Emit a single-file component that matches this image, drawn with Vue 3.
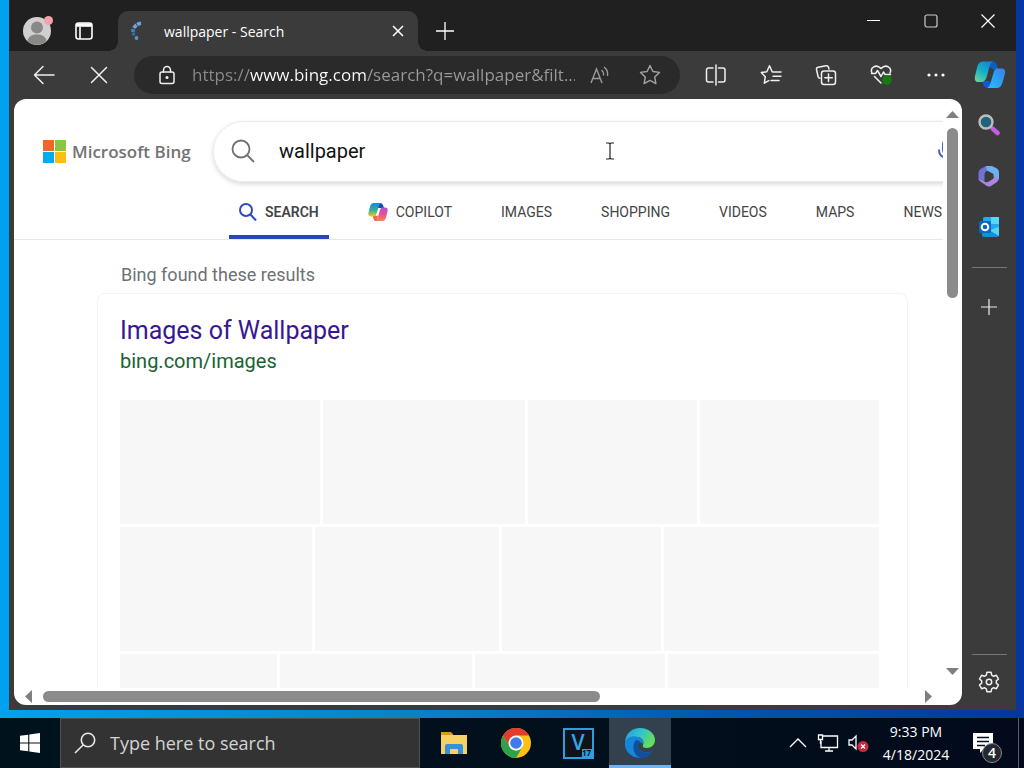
<script setup>
import { ref } from "vue";

const address = ref("https://www.bing.com/search?q=wallpaper&filt...");
const query = ref("wallpaper");
const taskQuery = ref("");

const tabs = [
  { id: 1, label: "SEARCH", icon: "search" },
  { id: 2, label: "COPILOT", icon: "copilot" },
  { id: 3, label: "IMAGES" },
  { id: 4, label: "SHOPPING" },
  { id: 5, label: "VIDEOS" },
  { id: 6, label: "MAPS" },
  { id: 7, label: "NEWS" },
];
const activeTab = ref(1);

// relative widths of the image placeholders, row by row
const imageRows = [
  [201, 203, 169, 180],
  [193, 184, 160, 216],
  [158, 192, 191, 212],
];

const scroll = { vertical: 32, horizontal: 64 };
</script>

<template>
  <div class="desktop">
    <div class="workspace">
      <main class="window">
        <header class="titlebar">
          <button class="profile" aria-label="Profile">
            <svg width="32" height="32" viewBox="0 0 32 32">
              <circle cx="15" cy="17" r="14" fill="#d2d0ce" />
              <circle cx="15" cy="13.500" r="6" fill="#8a8886" />
              <path d="M5.500 27c1-5 4.500-6.500 9.500-6.500s8.500 1.500 9.500 6.500a14 14 0 0 1-19 0z" fill="#8a8886" />
              <circle cx="26.500" cy="6.500" r="4.500" fill="#f4a3aa" />
            </svg>
          </button>
          <button class="tab-actions" aria-label="Tab actions menu">
            <svg width="20" height="20" viewBox="0 0 20 20" fill="none" stroke="#fff" stroke-width="1.600">
              <rect x="2" y="2" width="16" height="16" rx="2.500" />
              <path d="M2 4.500h16M6 6v12" />
              <path d="M3 4h14" stroke-width="3.500" />
            </svg>
          </button>
          <div class="browser-tab">
            <svg width="20" height="20" viewBox="0 0 20 20" fill="none">
              <path d="M13 2.200Q8 3 6 7" stroke="#6ba6dc" stroke-width="3.600" stroke-dasharray="4 .8" />
              <path d="M5 8v3" stroke="#3f83c4" stroke-width="3.600" />
              <circle cx="5.500" cy="13" r="1.800" fill="#2f6fae" />
              <circle cx="8.500" cy="17" r="1.900" fill="#5596d2" />
            </svg>
            <span class="tab-title">wallpaper - Search</span>
            <button class="close-tab" aria-label="Close tab">
              <svg width="12" height="12" viewBox="0 0 12 12" stroke="#fff" stroke-width="1.500">
                <path d="M1 1l10 10M11 1L1 11" />
              </svg>
            </button>
          </div>
          <button class="new-tab" aria-label="New tab">
            <svg width="18" height="18" viewBox="0 0 18 18" stroke="#fff" stroke-width="1.300">
              <path d="M9 0v18M0 9h18" />
            </svg>
          </button>
          <div class="window-controls">
            <button aria-label="Minimize">
              <svg width="14" height="14" viewBox="0 0 14 14" stroke="#fff"><path d="M0 6.500h13" /></svg>
            </button>
            <button aria-label="Maximize">
              <svg width="14" height="14" viewBox="0 0 14 14" fill="none" stroke="#ccc" stroke-width="1.200">
                <rect x="1" y="1" width="12" height="12" rx="2" />
              </svg>
            </button>
            <button aria-label="Close">
              <svg width="14" height="14" viewBox="0 0 14 14" stroke="#fff" stroke-width="1.200">
                <path d="M.5.5l13 13M13.500.5l-13 13" />
              </svg>
            </button>
          </div>
        </header>

        <div class="toolbar">
          <div class="tools">
            <button aria-label="Back">
              <svg class="line-icon" width="22" height="20" viewBox="0 0 22 20">
                <path d="M10 1.500L1.500 10l8.500 8.500M1.500 10H21" />
              </svg>
            </button>
            <button aria-label="Stop loading">
              <svg class="line-icon" width="18" height="18" viewBox="0 0 18 18">
                <path d="M1.500 1.500l15 15M16.500 1.500l-15 15" />
              </svg>
            </button>
          </div>
          <div class="omnibox">
            <button aria-label="View site information">
              <svg class="line-icon" width="18" height="20" viewBox="0 0 18 20">
                <rect x="2" y="7" width="14" height="11.500" rx="2" />
                <path d="M5.500 7V5a3.500 3.500 0 0 1 7 0v2" />
                <circle cx="9" cy="12.500" r=".8" fill="#fff" />
              </svg>
            </button>
            <input v-model="address" class="address" type="text" aria-label="Address and search bar" />
            <button aria-label="Read aloud">
              <svg width="22" height="20" viewBox="0 0 22 20" fill="none" stroke="#9b9b9b" stroke-width="1.400">
                <path d="M2 18L7.500 4 13 18M4 13.500h7M12.500 5q2.500 2 2 5.500M15 2q4.500 3.500 3.500 9" />
              </svg>
            </button>
            <button aria-label="Add this page to favorites">
              <svg width="22" height="22" viewBox="0 0 22 22" fill="none" stroke="#a2a2a2" stroke-width="1.400" stroke-linejoin="round">
                <path d="M11 1.500l2.900 6 6.600.9-4.800 4.600 1.200 6.600-5.900-3.200-5.900 3.200 1.200-6.600L1.500 8.400l6.600-.9z" />
              </svg>
            </button>
          </div>
          <div class="tools">
            <button aria-label="Split screen">
              <svg class="line-icon" width="22" height="22" viewBox="0 0 22 22">
                <path d="M8 4H3.500a2 2 0 0 0-2 2v10a2 2 0 0 0 2 2H8M13.500 4h4.500a2 2 0 0 1 2 2v10a2 2 0 0 1-2 2h-4.500M11 1v20" />
              </svg>
            </button>
            <button aria-label="Favorites">
              <svg class="line-icon" width="22" height="22" viewBox="0 0 22 22">
                <path d="M13 8l-.8-.3L9.500 1.800 6.800 7.700l-5.500.8 4 4.200-1 6.500 4.500-2.500M13 8h8M13 12.200h8M11 16.500h8" />
              </svg>
            </button>
            <button aria-label="Collections">
              <svg class="line-icon" width="22" height="22" viewBox="0 0 22 22">
                <path d="M14 5l-.6-2a2 2 0 0 0-2.300-1.300l-8 1.500A2 2 0 0 0 1.500 5.500l1.700 7.500q.4 1.200 1.800 1.200" />
                <rect x="6.500" y="7" width="14" height="13.500" rx="2.500" />
                <path d="M13.500 10v7.500M9.800 13.700h7.500" />
              </svg>
            </button>
            <button aria-label="Browser essentials">
              <svg class="line-icon" width="22" height="22" viewBox="0 0 22 22">
                <path d="M2 9C-.5 3.500 6-.5 11 4.500 16-.5 22.500 3.500 20 9M1.500 9.500h4l2-3 3.500 6 2.500-4.500 1.500 2.500h5.500M4.500 12.500l6.500 6.500" />
                <circle cx="17" cy="16" r="4.800" fill="#137b10" stroke="none" />
              </svg>
            </button>
            <button aria-label="Settings and more">
              <svg width="18" height="4" viewBox="0 0 18 4" fill="#fff">
                <circle cx="2" cy="2" r="1.600" /><circle cx="9" cy="2" r="1.600" /><circle cx="16" cy="2" r="1.600" />
              </svg>
            </button>
            <button class="copilot-btn" aria-label="Copilot">
              <svg width="32" height="28" viewBox="0 0 32 28">
                <defs>
                  <linearGradient id="copilotLeft" x1="0" y1="1" x2="0.600" y2="0">
                    <stop offset="0" stop-color="#74d997" /><stop offset=".55" stop-color="#18b3c2" /><stop offset="1" stop-color="#1689d8" />
                  </linearGradient>
                  <linearGradient id="copilotRight" x1="1" y1="0" x2="0" y2="1">
                    <stop offset="0" stop-color="#397fe8" /><stop offset="1" stop-color="#22c1ff" />
                  </linearGradient>
                </defs>
                <path d="M17 .5h2q3 0 4 4l1 4h-5l-4-3z" fill="#0b5fc0" />
                <path d="M8 20h7l4 7h-4q-5 0-6-4z" fill="#1357df" />
                <path d="M9 .5h10q-2.500 1-3.500 5L13 15q-1.500 6-6 6H4Q0 21 1 15L3.500 5Q5 .5 9 .5z" fill="url(#copilotLeft)" />
                <path d="M23 7.500h4.500q4.500 0 3.500 5l-2.500 9q-1.500 5.500-6 5.500H13q2.500-1 3.500-5l3-10q1-4.500 3.500-4.500z" fill="url(#copilotRight)" />
              </svg>
            </button>
          </div>
        </div>

        <div class="window-body">
          <section class="page">
            <div class="viewport">
              <div class="content">
                <form class="search-row" @submit.prevent>
                  <a class="logo" href="#">
                    <svg width="23" height="23" viewBox="0 0 23 23">
                      <path d="M0 0h11v11H0z" fill="#f06529" /><path d="M12 0h11v11H12z" fill="#8cc63f" />
                      <path d="M0 12h11v11H0z" fill="#00adef" /><path d="M12 12h11v11H12z" fill="#fdbf0f" />
                    </svg>
                    <span>Microsoft Bing</span>
                  </a>
                  <div class="searchbox">
                    <svg width="24" height="24" viewBox="0 0 24 24" fill="none" stroke="#717171" stroke-width="1.800">
                      <circle cx="10" cy="10" r="8.500" /><path d="M16 16l7 7" />
                    </svg>
                    <input v-model="query" type="text" aria-label="Search the web" />
                    <button aria-label="Search using voice">
                      <svg width="18" height="26" viewBox="0 0 18 26" fill="none" stroke="#4b62b5" stroke-width="2">
                        <rect x="5" y="2" width="8" height="14" rx="4" />
                        <path d="M1 11.500q0 8 8 8t8-8M9 19.500V25" />
                      </svg>
                    </button>
                    <svg class="ibeam" width="10" height="18" viewBox="0 0 10 18" fill="none" stroke="#222" stroke-width="1.200">
                      <path d="M1 1h3l1 1 1-1h3M5 2v14M1 17h3l1-1 1 1h3" />
                    </svg>
                  </div>
                </form>

                <nav class="scopes">
                  <a
                    v-for="tab in tabs"
                    :key="tab.id"
                    href="#"
                    :class="{ active: tab.id === activeTab }"
                    @click.prevent="activeTab = tab.id"
                  >
                    <svg v-if="tab.icon === 'search'" width="18" height="18" viewBox="0 0 18 18" fill="none" stroke="#2a4cc0" stroke-width="2">
                      <circle cx="7" cy="7" r="6" /><path d="M11.500 11.500L17 17.500" />
                    </svg>
                    <svg v-if="tab.icon === 'copilot'" width="20" height="18" viewBox="0 0 20 18">
                      <defs>
                        <linearGradient id="scopeLeft" x1="0" y1="0" x2="0" y2="1">
                          <stop offset="0" stop-color="#148ce0" /><stop offset=".5" stop-color="#31ab9b" /><stop offset="1" stop-color="#eecb26" />
                        </linearGradient>
                        <linearGradient id="scopeRight" x1="0" y1="0" x2="0" y2="1">
                          <stop offset="0" stop-color="#a653e0" /><stop offset=".5" stop-color="#ea4e93" /><stop offset="1" stop-color="#f98556" />
                        </linearGradient>
                      </defs>
                      <path d="M10 0h2.500q2 0 2.700 2.500l.8 2.500h-6z" fill="#184bb5" />
                      <path d="M4.500 12.500H10l-1 5.500H7.500Q6 18 5.400 15.500z" fill="#f26a42" />
                      <path d="M5.500 0H13q-1.500.5-2.200 3L9 9.500Q8 13.500 5 13.500H3Q-.5 13.500.5 9.500l1.500-6Q3 0 5.500 0z" fill="url(#scopeLeft)" />
                      <path d="M14.500 4.500H17q3.500 0 2.500 4l-1.500 6Q17 18 14.500 18H7.500q1.500-.5 2.200-3L11.500 8.500q1-4 3-4z" fill="url(#scopeRight)" />
                      <path d="M10.500 6.500q.8-1.500 2-1.500-.7 1-1.200 3L10 11.500q-.5 1.500-2 1.500.7-1 1.200-3z" fill="#fff" />
                    </svg>
                    {{ tab.label }}
                  </a>
                </nav>

                <p class="found">Bing found these results</p>
                <article class="card">
                  <h2><a href="#">Images of Wallpaper</a></h2>
                  <cite>bing.com/images</cite>
                  <div class="gallery">
                    <div v-for="(row, i) in imageRows" :key="i" class="gallery-row">
                      <div v-for="(size, j) in row" :key="j" class="thumb" :style="{ flexGrow: size }"></div>
                    </div>
                  </div>
                </article>
              </div>
            </div>

            <div class="scrollbar vertical">
              <svg width="13" height="7" viewBox="0 0 13 7" fill="#7f7f7f"><path d="M0 7l6.500-7L13 7z" /></svg>
              <div class="track">
                <div class="bar" :style="{ height: scroll.vertical + '%' }"></div>
              </div>
              <svg width="13" height="7" viewBox="0 0 13 7" fill="#7f7f7f"><path d="M0 0l6.500 7L13 0z" /></svg>
            </div>
            <div class="scrollbar horizontal">
              <svg width="7" height="13" viewBox="0 0 7 13" fill="#7f7f7f"><path d="M7 0L0 6.500 7 13z" /></svg>
              <div class="track">
                <div class="bar" :style="{ width: scroll.horizontal + '%' }"></div>
              </div>
              <svg width="7" height="13" viewBox="0 0 7 13" fill="#7f7f7f"><path d="M0 0l7 6.500L0 13z" /></svg>
            </div>
          </section>

          <aside class="sidebar">
            <button aria-label="Search">
              <svg width="22" height="22" viewBox="0 0 22 22">
                <path d="M12 12l3 3" stroke="#b8b8b8" stroke-width="3" />
                <path d="M15 15l4.500 4" stroke="#c65be6" stroke-width="4.500" stroke-linecap="round" />
                <circle cx="8" cy="8" r="6.500" fill="#20637a" stroke="#bdbdbd" stroke-width="2.400" />
              </svg>
            </button>
            <button aria-label="Microsoft 365">
              <svg width="22" height="22" viewBox="0 0 22 22">
                <path d="M8 1L2.500 4Q.5 5.500.5 8v7l6 2.500V9.500Q6.500 7 8.500 6L14 3z" fill="#6d74d6" />
                <path d="M1 14q.3 2 2 3l6 4q2 1.200 4 0l6-4q2-1.500 2-4V9l-5 3q-.5 1.500-2 2.500l-3 2q-2 1-4 .5z" fill="#ab84e4" />
                <path d="M8 1h6l5 2.500q2 1.500 2 4V14l-5.500-2.500V9L9 5.500z" fill="#6fb0f0" />
              </svg>
            </button>
            <button aria-label="Outlook">
              <svg width="22" height="22" viewBox="0 0 22 22">
                <rect x="5" y="1" width="16" height="19" rx="1.500" fill="#28a8ea" />
                <path d="M13 1h8v7h-8z" fill="#50d9ff" />
                <path d="M4 11l17 2v6q0 2-2 2H6q-2 0-2-2z" fill="#1490df" />
                <path d="M21 11v9L11 14z" fill="#5ad1f5" />
                <rect x="1" y="5" width="12" height="12" rx="1.500" fill="#0868be" />
                <circle cx="7" cy="11" r="3.300" fill="none" stroke="#fff" stroke-width="2" />
              </svg>
            </button>
            <hr />
            <button aria-label="Customize">
              <svg width="16" height="16" viewBox="0 0 16 16" stroke="#eee" stroke-width="1.200"><path d="M8 0v16M0 8h16" /></svg>
            </button>
            <hr class="bottom-rule" />
            <button class="settings" aria-label="Settings">
              <svg class="line-icon" width="22" height="22" viewBox="0 0 22 22">
                <path d="M8.900 1.300h4.200l.6 2.900 1.900 1.100 2.800-1 2.100 3.700-2.200 1.900v2.200l2.200 1.900-2.100 3.700-2.800-1-1.900 1.100-.6 2.900H8.900l-.6-2.900-1.900-1.100-2.800 1L1.500 14l2.200-1.900V9.900L1.500 8l2.100-3.700 2.800 1 1.900-1.100z" />
                <circle cx="11" cy="11" r="2.700" />
              </svg>
            </button>
          </aside>
        </div>
      </main>
    </div>

    <footer class="taskbar">
      <button class="start" aria-label="Start">
        <svg width="20" height="20" viewBox="0 0 20 20" fill="#fff">
          <path d="M0 2.800L8.200 1.700v7.800H0zM9.300 1.500L20 0v9.500H9.300zM0 10.500h8.200v7.800L0 17.200zM9.300 10.500H20V20L9.300 18.500z" />
        </svg>
      </button>
      <label class="task-search">
        <svg width="22" height="22" viewBox="0 0 22 22" fill="none" stroke="#e8e8e8" stroke-width="1.600">
          <circle cx="14" cy="8" r="6.700" /><path d="M9.300 12.800L1 21" />
        </svg>
        <input v-model="taskQuery" type="text" placeholder="Type here to search" aria-label="Type here to search" />
      </label>
      <div class="pinned">
        <button aria-label="File Explorer">
          <svg width="28" height="26" viewBox="0 0 28 26">
            <path d="M1 2h10l2 2v4H1z" fill="#d99a1c" />
            <path d="M1 5h26v19H1z" fill="#f8d166" />
            <path d="M5 24v-8q0-2 2-2h14q2 0 2 2v8h-5v-5h-8v5z" fill="#3b8fd2" />
          </svg>
        </button>
        <button aria-label="Google Chrome">
          <svg width="30" height="30" viewBox="0 0 30 30">
            <circle cx="15" cy="15" r="15" fill="#fbc116" />
            <path d="M2 7.500A15 15 0 0 1 28 7.500H15L8.500 18.800z" fill="#e33b2e" />
            <path d="M2 7.500A15 15 0 0 0 15 30l6.500-11.200A7.500 7.500 0 0 1 8.500 18.800z" fill="#2ba24c" />
            <circle cx="15" cy="15" r="7.500" fill="#fff" /><circle cx="15" cy="15" r="5.800" fill="#3b7ded" />
          </svg>
        </button>
        <button class="vegas" aria-label="VEGAS Pro">
          <span class="vegas-box">V<span class="vegas-version">17</span></span>
        </button>
        <button class="running" aria-label="Microsoft Edge">
          <svg width="32" height="32" viewBox="0 0 32 32">
            <defs>
              <linearGradient id="edgeTop" x1="0" y1="0" x2="1" y2=".5">
                <stop offset="0" stop-color="#2299d8" /><stop offset=".5" stop-color="#2fc3d0" /><stop offset="1" stop-color="#66df57" />
              </linearGradient>
            </defs>
            <path d="M1 15C2 6 8 1 16 1c9 0 15 6 15 12 0 5-4 8-8 8-3 0-5-1-4-3 2-5-2-8-7-8-6 0-10 3-11 5z" fill="url(#edgeTop)" />
            <path d="M1 15c2-5 8-7 13-5 4 1 6 4 5 7-3-3-6 0-5 3 1 5 8 7 14 4-3 5-8 7-13 7C6 30 0 23 1 15z" fill="#1685dc" />
            <path d="M12 13c-4 4-4 14 4 18 5 0 10-3 12-7-6 3-13 1-14-4-.5-2 1-4 3-4-1-2-3-3-5-3z" fill="#0e509c" />
          </svg>
        </button>
      </div>
      <div class="tray">
        <button aria-label="Show hidden icons">
          <svg width="18" height="12" viewBox="0 0 18 12" fill="none" stroke="#fff" stroke-width="1.300"><path d="M1 10l8-8 8 8" /></svg>
        </button>
        <button aria-label="Network">
          <svg width="22" height="20" viewBox="0 0 22 20" fill="none" stroke="#fff" stroke-width="1.300">
            <path d="M6 3h14.500v11.500H4V8M12 14.500V18M8 18h8" /><path d="M1.500 2h4v4.500h-4zM3.500 7v4" />
          </svg>
        </button>
        <button aria-label="Speakers, muted">
          <svg width="22" height="20" viewBox="0 0 22 20" fill="none" stroke="#fff" stroke-width="1.300">
            <path d="M2 7h3l4-4v13l-4-4H2z" />
            <circle cx="16" cy="13.500" r="5.500" fill="#c9283f" stroke="none" />
            <path d="M14 11.500l4 4M18 11.500l-4 4" />
          </svg>
        </button>
        <button class="clock"><span>9:33 PM</span><span>4/18/2024</span></button>
        <button class="notifications" aria-label="Notifications">
          <svg width="20" height="20" viewBox="0 0 20 20">
            <path d="M0 0h20v16h-9l-4 4v-4H0z" fill="#fff" />
            <path d="M4 4.500h12M4 8.500h12M4 12.500h8" stroke="#07111f" stroke-width="1.500" />
          </svg>
          <span class="count">4</span>
        </button>
      </div>
    </footer>
  </div>
</template>

<style>
body {
  margin: 0;
}
</style>

<style scoped>
.desktop {
  display: flex;
  flex-direction: column;
  height: 100vh;
  overflow: hidden;
  background: linear-gradient(90deg, #00a2f0 0%, #087fbf 45%, #0655ab 70%, #0636a0 100%);
  font-family: "Open Sans", "Noto Sans", sans-serif;
}

button {
  display: flex;
  align-items: center;
  justify-content: center;
  padding: 0;
  border: none;
  background: none;
  color: inherit;
  font: inherit;
  cursor: pointer;
}

input {
  min-width: 0;
  padding: 0;
  border: none;
  outline: none;
  background: none;
  font: inherit;
}

a {
  color: inherit;
  text-decoration: none;
}

svg {
  flex-shrink: 0;
}

.line-icon {
  fill: none;
  stroke: #f0f0f0;
  stroke-width: 1.5px;
  stroke-linecap: round;
  stroke-linejoin: round;
}

.workspace {
  display: flex;
  flex: 1;
  min-height: 0;
  padding: 0 8px 8px 9px;
}

.window {
  display: flex;
  flex: 1;
  flex-direction: column;
  min-width: 0;
  background: #3b3b3b;
}

.titlebar {
  display: flex;
  height: 51px;
  background: #202020;
  color: #fff;
}

.profile {
  width: 32px;
  margin-left: 13px;
  padding-top: 8px;
}

.tab-actions {
  width: 42px;
  padding: 11px 0 0;
  margin: 0 13px 0 9px;
}

.browser-tab {
  position: relative;
  display: flex;
  align-items: center;
  width: 300px;
  height: 40px;
  margin-top: 11px;
  padding: 0 14px 0 10px;
  box-sizing: border-box;
  border-radius: 10px 10px 0 0;
  background: #3b3b3b;
  font-size: 14px;
}

.browser-tab::before,
.browser-tab::after {
  content: "";
  position: absolute;
  bottom: 0;
  width: 10px;
  height: 10px;
}

.browser-tab::before {
  right: 100%;
  background: radial-gradient(circle at 0 0, transparent 10px, #3b3b3b 10px);
}

.browser-tab::after {
  left: 100%;
  background: radial-gradient(circle at 100% 0, transparent 10px, #3b3b3b 10px);
}

.tab-title {
  flex: 1;
  margin-left: 16px;
}

.new-tab {
  width: 54px;
  padding-top: 11px;
}

.window-controls {
  display: flex;
  height: 42px;
  margin-left: auto;
}

.window-controls button {
  width: 57px;
}

.toolbar {
  display: flex;
  align-items: center;
  gap: 8px;
  height: 48px;
  padding-left: 7px;
}

.tools {
  display: flex;
}

.tools button {
  width: 55px;
  height: 38px;
}

.tools .copilot-btn {
  width: 53px;
}

.omnibox {
  display: flex;
  flex: 1;
  align-items: center;
  min-width: 0;
  height: 38px;
  padding: 0 5px 0 8px;
  border-radius: 19px;
  background: #2a2a2a;
}

.omnibox button {
  width: 50px;
}

.address {
  flex: 1;
  background: linear-gradient(90deg, #8c8c8c 58px, #fff 58px, #fff 174px, #9b9b9b 174px);
  background-clip: text;
  -webkit-background-clip: text;
  -webkit-text-fill-color: transparent;
  font-size: 17px;
  line-height: 28px;
}

.window-body {
  display: flex;
  flex: 1;
  min-height: 0;
  padding: 0 0 5px 5px;
}

.page {
  display: grid;
  grid-template-rows: minmax(0, 1fr) 17px;
  grid-template-columns: minmax(0, 1fr) 19px;
  flex: 1;
  min-width: 0;
  overflow: hidden;
  border-radius: 12px;
  background: #fff;
}

.viewport {
  overflow: hidden;
  font-family: Roboto, sans-serif;
}

.content {
  width: max-content;
  min-width: 100%;
}

.search-row {
  display: flex;
  align-items: center;
  padding: 22px 29px 0;
}

.logo {
  display: flex;
  align-items: center;
  gap: 6px;
  width: 170px;
  color: #737373;
  font-family: "Open Sans", sans-serif;
  font-size: 17px;
  font-weight: 600;
  white-space: nowrap;
}

.searchbox {
  position: relative;
  display: flex;
  align-items: center;
  width: 840px;
  height: 61px;
  box-sizing: border-box;
  padding: 0 96px 2px 17px;
  border: 1px solid #ebebeb;
  border-radius: 31px;
  box-shadow: 0 2px 5px rgba(0, 0, 0, 0.16);
}

.searchbox input {
  flex: 1;
  margin-left: 24px;
  color: #111;
  font-size: 20px;
}

.ibeam {
  position: absolute;
  top: 20px;
  left: 391px;
}

.scopes {
  display: flex;
  gap: 29px;
  height: 57px;
  padding-left: 215px;
  border-bottom: 1px solid #e8e8e8;
  color: #444;
  font-size: 14px;
}

.scopes a {
  display: flex;
  align-items: center;
  gap: 8px;
  padding: 6px 10px 0;
  border-bottom: 4px solid transparent;
}

.scopes .active {
  border-color: #2848b8;
  font-weight: 600;
}

.found {
  margin: 22px 0 5px 107px;
  color: #6d7276;
  font-size: 18px;
  line-height: 26px;
}

.card {
  width: 811px;
  box-sizing: border-box;
  margin-left: 83px;
  padding: 21px 28px 20px 22px;
  border: 1px solid #f3f3f3;
  border-radius: 8px;
}

h2 {
  margin: 0;
  color: #371793;
  font-size: 25px;
  font-weight: 400;
  line-height: 32px;
}

cite {
  display: block;
  color: #176431;
  font-size: 20px;
  font-style: normal;
  line-height: 29px;
}

.gallery {
  display: flex;
  flex-direction: column;
  gap: 3px;
  margin-top: 24px;
}

.gallery-row {
  display: flex;
  gap: 3px;
  height: 124px;
}

.thumb {
  flex-basis: 0;
  background: #f7f7f7;
}

.scrollbar {
  display: flex;
  align-items: center;
}

.vertical {
  flex-direction: column;
  padding: 12px 0 13px;
}

.horizontal {
  padding: 0 11px;
}

.track {
  flex: 1;
}

.bar {
  border-radius: 6px;
  background: #8b8b8b;
}

.vertical .track {
  width: 11px;
  margin: 10px 0 9px;
}

.horizontal .track {
  margin: 0 11px;
}

.horizontal .bar {
  height: 11px;
}

.sidebar {
  display: flex;
  flex-direction: column;
  align-items: center;
  width: 54px;
}

.sidebar button {
  width: 54px;
  height: 51px;
}

.sidebar hr {
  width: 35px;
  margin: 15px 0 13px;
  border: none;
  border-top: 1px solid #767676;
}

.sidebar .bottom-rule {
  margin: auto 0 4px;
}

.sidebar .settings {
  height: 46px;
}

.taskbar {
  display: flex;
  height: 50px;
  background: linear-gradient(90deg, #00131d, #020f1c 60%, #020a1b);
  color: #fff;
}

.start {
  width: 60px;
}

.task-search {
  display: flex;
  align-items: center;
  gap: 14px;
  width: 360px;
  box-sizing: border-box;
  padding: 0 13px;
  border: 1px solid #505050;
  background: #333;
  font-size: 18px;
}

.task-search input {
  flex: 1;
  color: #fff;
}

.task-search input::placeholder {
  color: #d4d4d4;
  opacity: 1;
}

.pinned {
  display: flex;
  margin-left: 3px;
}

.pinned button {
  width: 62px;
}

.pinned .running {
  box-sizing: border-box;
  padding-top: 3px;
  border-bottom: 3px solid #73b2ef;
  background: #33414e;
}

.vegas-box {
  position: relative;
  width: 27px;
  height: 27px;
  border: 2px solid #2c9fe0;
  background: #101418;
  color: #31a9f0;
  font-size: 21px;
  font-weight: 600;
  line-height: 25px;
}

.vegas-version {
  position: absolute;
  right: 0;
  bottom: 0;
  width: 10px;
  background: #2c9fe0;
  color: #071520;
  font-size: 8px;
  font-weight: 700;
  line-height: 8px;
}

.tray {
  display: flex;
  margin-left: auto;
  padding-right: 5px;
}

.tray button {
  width: 30px;
}

.tray .clock {
  flex-direction: column;
  width: 86px;
  font-size: 14px;
  line-height: 23px;
  white-space: nowrap;
}

.tray .notifications {
  position: relative;
  width: 60px;
  border-right: 1px solid #526070;
}

.notifications svg {
  margin-right: 12px;
}

.count {
  position: absolute;
  right: 16px;
  bottom: 5px;
  width: 18px;
  border: 1px solid #858b94;
  border-radius: 50%;
  background: #25292f;
  font-size: 14px;
  font-weight: 600;
  line-height: 18px;
}
</style>
